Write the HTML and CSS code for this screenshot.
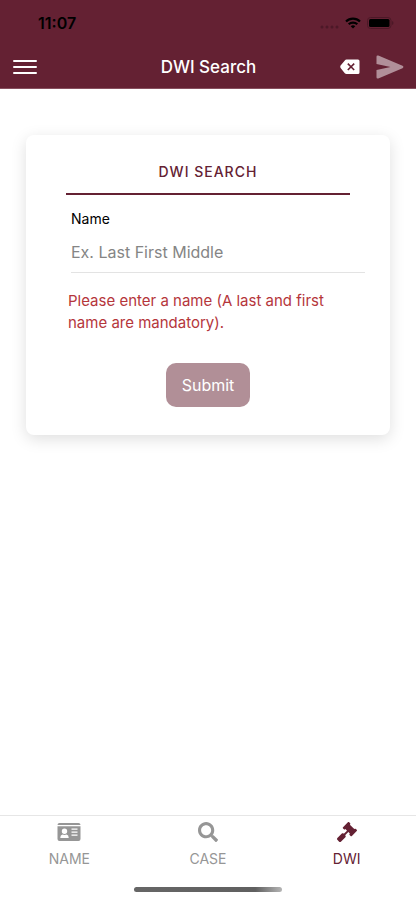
FILE: index.html
```html
<!DOCTYPE html>
<html lang="en">
<head>
<meta charset="utf-8">
<meta name="viewport" content="width=device-width, initial-scale=1">
<title>DWI Search</title>
<link rel="stylesheet" href="styles.css">
</head>
<body>
<header class="header">
  <div class="status">
    <span class="time">11:07</span>
    <span class="signals">
      <svg width="20" height="14" viewBox="0 0 20 14" fill="#4c1827"><circle cx="3" cy="11" r="1.500"/><circle cx="8" cy="11" r="1.500"/><circle cx="13" cy="11" r="1.500"/><circle cx="18" cy="11" r="1.500"/></svg>
      <svg width="16" height="12" viewBox="0 0 16 12" fill="none" stroke="#000" stroke-width="2.200"><path d="M1 4.500a10 10 0 0 1 14 0"/><path d="M3.700 7.300a6.200 6.200 0 0 1 8.600 0"/><path d="M8 11.600L5.700 9.300a3.300 3.300 0 0 1 4.600 0Z" fill="#000" stroke="none"/></svg>
      <svg width="27" height="12" viewBox="0 0 27 12"><rect x=".5" y=".5" width="23.500" height="11" rx="3" fill="none" stroke="#4c1827"/><rect x="2" y="2" width="20.500" height="8" rx="1.500"/><path d="M25 4q1.500.5 1.500 2T25 8Z" fill="#4c1827"/></svg>
    </span>
  </div>
  <nav class="bar">
    <button class="icon-button menu" type="button" aria-label="Menu">
      <svg width="24" height="16" viewBox="0 0 24 16" stroke="#fff" stroke-width="2" stroke-linecap="round"><path d="M1 2h22M1 8h22M1 14h22"/></svg>
    </button>
    <h1 class="title">DWI Search</h1>
    <div class="actions">
      <button class="icon-button" type="button" aria-label="Clear">
        <svg width="20" height="16" viewBox="0 0 20 16"><path d="M6.500.5H18Q19.500.5 19.500 2v11.500Q19.500 15 18 15H6.500Q5.500 15 4.800 14.200L.6 9Q-.1 7.800.6 6.600L4.800 1.400Q5.500.5 6.500.5Z" fill="#fff"/><path d="M7.800 4.600l6.400 6.400M14.200 4.600l-6.400 6.400" stroke="#642133" stroke-width="1.600"/></svg>
      </button>
      <button class="icon-button" type="button" aria-label="Send" disabled>
        <svg width="28" height="24" viewBox="0 0 28 24" fill="#b18f99"><path d="M.5 1.800Q.5 0 2.300.6L26.500 10.800Q28.300 12 26.500 13.200L2.300 23.400Q.5 24 .5 22.200V15L14.500 12 .5 9Z"/></svg>
      </button>
    </div>
  </nav>
</header>
<main class="content">
  <form class="card">
    <h2 class="card-title">DWI SEARCH</h2>
    <div class="field">
      <label class="label" for="name">Name</label>
      <input class="input" id="name" type="text" placeholder="Ex. Last First Middle">
    </div>
    <p class="error">Please enter a name (A last and first name are mandatory).</p>
    <button class="submit" type="submit" disabled>Submit</button>
  </form>
</main>
<footer class="footer">
  <nav class="tabs">
    <a class="tab" href="#name">
      <svg width="24" height="20" viewBox="0 0 24 20"><path fill="currentColor" fill-rule="evenodd" d="M2.500 1h19Q23.500 1 23.500 3H.5Q.5 1 2.500 1ZM.5 4.200h23V17q0 2-2 2h-19q-2 0-2-2ZM7.500 6.500a2.700 2.700 0 1 0 0 5.400 2.700 2.700 0 0 0 0-5.400ZM5.500 12.500Q3.300 13 3.300 15.500q0 .5.500.5h7.400q.5 0 .5-.5 0-2.500-2.200-3-2 .8-4 0ZM14.500 6.500v1.300h6V6.500ZM14.500 9.500v1.300h6V9.500ZM14.500 12.500v1.300h6v-1.300Z"/></svg>
      <span>NAME</span>
    </a>
    <a class="tab" href="#case">
      <svg width="20" height="20" viewBox="0 0 512 512"><path fill="currentColor" d="M505 442.700L405.300 343c-4.500-4.500-10.600-7-17-7H372c27.600-35.300 44-79.700 44-128C416 93.100 322.900 0 208 0S0 93.100 0 208s93.100 208 208 208c48.300 0 92.700-16.400 128-44v16.300c0 6.400 2.500 12.500 7 17l99.700 99.700c9.400 9.400 24.600 9.400 33.900 0l28.300-28.300c9.400-9.400 9.400-24.600.1-34zM208 336c-70.700 0-128-57.200-128-128 0-70.700 57.200-128 128-128 70.700 0 128 57.200 128 128 0 70.700-57.200 128-128 128z"/></svg>
      <span>CASE</span>
    </a>
    <a class="tab active" href="#dwi" aria-current="page">
      <svg width="20" height="20" viewBox="0 0 512 512"><path fill="currentColor" d="M504.971 199.362l-22.627-22.627c-9.373-9.373-24.569-9.373-33.941 0l-5.657 5.657L329.608 69.255l5.657-5.657c9.373-9.373 9.373-24.569 0-33.941L312.638 7.029c-9.373-9.373-24.569-9.373-33.941 0L154.246 131.480c-9.373 9.373-9.373 24.569 0 33.941l22.627 22.627c9.373 9.373 24.569 9.373 33.941 0l5.657-5.657 39.598 39.598-81.040 81.040-5.657-5.657c-12.497-12.497-32.758-12.497-45.255 0L9.373 412.118c-12.497 12.497-12.497 32.758 0 45.255l45.255 45.255c12.497 12.497 32.758 12.497 45.255 0l114.745-114.745c12.497-12.497 12.497-32.758 0-45.255l-5.657-5.657 81.040-81.040 39.598 39.598-5.657 5.657c-9.373 9.373-9.373 24.569 0 33.941l22.627 22.627c9.373 9.373 24.569 9.373 33.941 0l124.451-124.451c9.372-9.372 9.372-24.568 0-33.941z"/></svg>
      <span>DWI</span>
    </a>
  </nav>
  <div class="home-indicator"></div>
</footer>
</body>
</html>
```
FILE: styles.css
```css
* { box-sizing: border-box; }

body {
  margin: 0;
  min-height: 100vh;
  display: flex;
  flex-direction: column;
  background: #fff;
  color: #000;
  font-family: Inter, "Liberation Sans", sans-serif;
  font-size: 16px;
}

h1, h2, p { margin: 0; }
svg { display: block; }

button {
  font: inherit;
  border: 0;
  cursor: pointer;
}

.header {
  background: #642133;
  border-bottom: 1px solid #874f5e;
}

.status {
  height: 45px;
  padding: 0 22px 0 38px;
  display: flex;
  align-items: center;
  justify-content: space-between;
}

.time {
  font-size: 16px;
  font-weight: 600;
}

.signals {
  display: flex;
  align-items: center;
  gap: 6px;
}

.bar {
  height: 43px;
  padding: 0 12px 0 13px;
  display: grid;
  grid-template-columns: 1fr auto 1fr;
  align-items: center;
}

.icon-button {
  padding: 0;
  background: none;
}

.menu { justify-self: start; }

.title {
  color: #fff;
  font-size: 17px;
  font-weight: 500;
}

.actions {
  display: flex;
  align-items: center;
  justify-content: flex-end;
  gap: 16px;
}

.content {
  flex: 1;
  padding: 46px 26px;
}

.card {
  padding: 24px 40px 28px;
  display: flex;
  flex-direction: column;
  border-radius: 8px;
  background: #fff;
  box-shadow: 0 4px 16px rgba(0, 0, 0, 0.13);
}

.card-title {
  padding: 2px 0 10px;
  border-bottom: 2px solid #642133;
  color: #642133;
  font-size: 14px;
  font-weight: 500;
  line-height: 22px;
  letter-spacing: 1px;
  text-align: center;
}

.field {
  margin: 14px -15px 0 5px;
  display: flex;
  flex-direction: column;
}

.label {
  font-size: 14px;
  line-height: 20px;
}

.input {
  width: 100%;
  height: 44px;
  padding: 2px 0 0;
  border: 0;
  border-bottom: 1px solid #e3e3e3;
  outline: 0;
  background: none;
  color: #000;
  font: inherit;
}

.input::placeholder {
  color: #858585;
  opacity: 1;
}

.error {
  padding: 17px 0 0 2px;
  color: #b5363b;
  font-size: 15px;
  line-height: 22px;
}

.submit {
  align-self: center;
  margin-top: 29px;
  padding: 11px 16px;
  border-radius: 10px;
  background: #b18f97;
  color: #fff;
  line-height: 22px;
}

.footer {
  padding-bottom: 8px;
  border-top: 1px solid #e6e6e6;
}

.tabs { display: flex; }

.tab {
  flex: 1;
  padding-top: 6px;
  display: flex;
  flex-direction: column;
  align-items: center;
  gap: 7px;
  color: #969696;
  font-size: 14px;
  line-height: 20px;
  text-decoration: none;
}

.active { color: #642133; }

.home-indicator {
  width: 148px;
  height: 5px;
  margin: 18px auto 0;
  border-radius: 3px;
  background: linear-gradient(90deg, #666, #606060 82%, #b5b5b5);
}
```
